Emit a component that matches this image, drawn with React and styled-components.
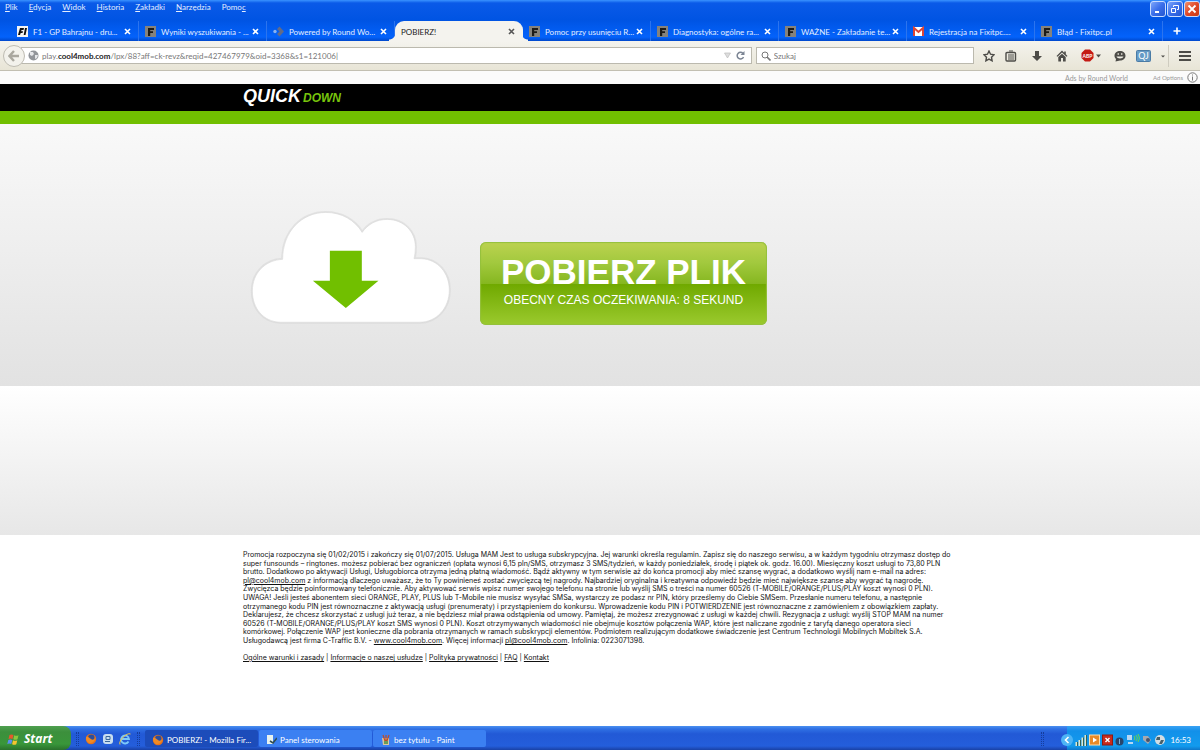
import React from "react";
import styled, { createGlobalStyle, css } from "styled-components";

const GlobalStyle = createGlobalStyle`
  * {
    box-sizing: border-box;
  }
  body {
    margin: 0;
    background: #fff;
    font-family: "Liberation Sans", Arial, sans-serif;
  }
  button,
  input {
    margin: 0;
    padding: 0;
    border: none;
    outline: none;
    background: none;
    color: inherit;
    font: inherit;
  }
  a {
    color: inherit;
  }
  svg {
    display: block;
    flex: none;
  }
`;

const uiFont = css`
  font-family: Lato, Tahoma, sans-serif;
  font-size: 8px;
  line-height: 12px;
  white-space: nowrap;
`;

const Desktop = styled.div`
  display: flex;
  flex-direction: column;
  min-height: 100vh;
`;

/* browser chrome */

const TitleBar = styled.header`
  ${uiFont}
  color: #e4eeff;
  background: linear-gradient(
    #3a93ff 0,
    #0a5ae8 3px,
    #0054e3 20px,
    #0362fb 37px,
    #0048cc 41px
  );
`;

const MenuRow = styled.div`
  display: flex;
  justify-content: space-between;
  height: 21px;
  padding-left: 5px;
`;

const Menu = styled.nav`
  display: flex;
  gap: 11px;
  padding-top: 1px;
  height: 14px;
`;

const WindowButtons = styled.div`
  display: flex;
  gap: 1px;
  padding-top: 1px;
`;

const WindowButton = styled.button`
  display: grid;
  place-items: center;
  width: 16px;
  height: 16px;
  border: 1px solid #c8dcff;
  border-radius: 3px;
  background: ${(props) =>
    props.$close
      ? "linear-gradient(135deg, #f0906c, #e0492a 50%, #c83a14)"
      : "linear-gradient(135deg, #7da6fb, #3a6eea 50%, #2456d0)"};
`;

const TabRow = styled.div`
  display: flex;
  height: 20px;
  padding-left: 11px;
`;

const TabItem = styled.div`
  position: relative;
  display: flex;
  flex: 1;
  align-items: center;
  gap: 5px;
  min-width: 0;
  padding: 1px 6px 0;
  border-right: 1px solid ${(props) => (props.$active ? "#f4f3ee" : "#2c74ee")};
  ${(props) =>
    props.$active &&
    css`
      color: #222;
      background: #f4f3ee;
      border-radius: 9px 9px 0 0;
      &::before,
      &::after {
        content: "";
        position: absolute;
        bottom: 0;
        width: 6px;
        height: 8px;
      }
      &::before {
        left: -6px;
        background: radial-gradient(
          circle at 0 0,
          transparent 6px,
          #f4f3ee 7px
        );
      }
      &::after {
        right: -6px;
        background: radial-gradient(
          circle at 100% 0,
          transparent 6px,
          #f4f3ee 7px
        );
      }
    `}
`;

const TabTitle = styled.span`
  flex: 1;
  min-width: 0;
`;

const CloseButton = styled.button`
  display: grid;
  place-items: center;
  width: 9px;
  height: 12px;
`;

const NewTab = styled.button`
  display: grid;
  place-items: center;
  width: 37px;
  padding-right: 10px;
`;

const NavBar = styled.div`
  ${uiFont}
  display: flex;
  align-items: center;
  height: 30px;
  padding: 0 9px 0 3px;
  background: linear-gradient(#f4f3ee, #e8e5d6);
  border-bottom: 1px solid #c2bfb2;
  color: #555;
`;

const BackButton = styled.button`
  display: grid;
  place-items: center;
  z-index: 1;
  width: 22px;
  height: 22px;
  border: 1px solid #bebcb2;
  border-radius: 50%;
  background: #f3f2ec;
`;

const Field = styled.div`
  display: flex;
  align-items: center;
  height: 17px;
  border: 1px solid #bbb9ae;
  background: #fff;
  color: #777;
`;

const UrlField = styled(Field)`
  flex: 717;
  gap: 3px;
  margin: 0 4px 0 -4px;
  padding: 0 5px 0 6px;
  b {
    color: #222;
  }
`;

const UrlText = styled.label`
  display: flex;
  flex: 1;
`;

const SearchField = styled(Field)`
  flex: 212;
  gap: 3px;
  padding-left: 4px;
`;

const TextInput = styled.input`
  flex: 1;
  min-width: 0;
  &::placeholder {
    color: #777;
    opacity: 1;
  }
`;

const ToolIcons = styled.div`
  display: flex;
  align-items: center;
  padding-left: 9px;
`;

const ToolButton = styled.button`
  display: flex;
  align-items: center;
  gap: 2px;
  height: 18px;
  margin-right: ${(props) => props.$gap}px;
`;

/* page */

const AdStrip = styled.div`
  ${uiFont}
  display: flex;
  justify-content: flex-end;
  align-items: center;
  height: 13px;
  padding-right: 2px;
  background: #fbfbfb;
  color: #999;
  font-size: 7px;
`;

const AdOptions = styled.a`
  display: flex;
  align-items: center;
  gap: 4px;
  margin-left: 25px;
  font-size: 6px;
  text-decoration: none;
`;

const Brand = styled.div`
  height: 40px;
  background: #000;
  border-bottom: 13px solid #71bf00;
`;

const Column = styled.div`
  width: 100%;
  max-width: 714px;
  margin: 0 auto;
`;

const Logo = styled.h1`
  margin: 0;
  color: #fff;
  font-size: 18px;
  font-style: italic;
  line-height: 24px;
  span {
    margin-left: 2px;
    color: #78c40c;
    font-size: 12px;
  }
`;

const Hero = styled.section`
  padding: 86px 0 61px;
  background: linear-gradient(#f9f9f9, #e2e2e2);
`;

const HeroContent = styled(Column)`
  display: flex;
  align-items: flex-end;
  gap: 27px;
  padding-left: 7px;
`;

const DownloadButton = styled.button`
  display: flex;
  flex-direction: column;
  align-items: center;
  width: 287px;
  height: 83px;
  padding-top: 11px;
  border-radius: 6px;
  color: #fff;
  background: linear-gradient(
    #bcd24f 0,
    #a2c93e 25%,
    #86b720 50%,
    #70a900 51%,
    #9bca2e 100%
  );
  box-shadow: inset 0 0 1px 1px #94c03c;
  cursor: pointer;
  strong {
    font-size: 35px;
    line-height: 38px;
  }
  span {
    font-size: 12px;
    line-height: 18px;
  }
`;

const Band = styled.div`
  height: 149px;
  background: linear-gradient(#fff, #e7e7e7);
`;

const Legal = styled(Column)`
  flex: 1;
  padding: 16px 0 40px;
  color: #111;
  font-family: Inter, "Liberation Sans", Arial, sans-serif;
  font-size: 7px;
  line-height: 8px;
`;

const Terms = styled.p`
  display: flex;
  flex-direction: column;
  justify-content: space-between;
  min-height: 94px;
  margin: 0 0 9px;
  white-space: nowrap;
`;

/* taskbar */

const Taskbar = styled.footer`
  ${uiFont}
  display: flex;
  height: 24px;
  color: #fff;
  background: linear-gradient(
    #4a90f0 0,
    #2f70e4 3px,
    #2259d6 8px,
    #245edb 20px,
    #1941a5 24px
  );
`;

const StartButton = styled.button`
  display: flex;
  align-items: center;
  gap: 4px;
  width: 71px;
  padding: 2px 0 0 7px;
  border-radius: 0 8px 8px 0;
  background: linear-gradient(#4fa050 0, #3c8f3c 6px, #39963a 18px, #2a702c);
  font-family: "Open Sans", sans-serif;
  font-size: 12px;
  font-style: italic;
  font-weight: bold;
`;

const Grip = styled.span`
  align-self: center;
  width: 3px;
  height: 14px;
  margin: 2px 5px 0;
  border: 1px dotted #143d9c;
  border-width: 0 1px;
`;

const QuickLaunch = styled.div`
  display: flex;
  align-items: center;
  gap: 5px;
  padding: 2px 1px 0;
`;

const Tasks = styled.div`
  display: flex;
  flex: 1;
  gap: 1px;
  padding-top: 4px;
`;

const Task = styled.button`
  display: flex;
  align-items: center;
  gap: 3px;
  width: 113px;
  height: 17px;
  padding: 2px 0 0 7px;
  border-radius: 2px;
  background: ${(props) => (props.$active ? "#1c4cba" : "#3b80f2")};
`;

const Tray = styled.div`
  display: flex;
  align-items: center;
  gap: 2px;
  padding: 3px 9px 0 0;
  margin-left: 18px;
  background: linear-gradient(#3aa2f4 0, #1290e9 5px, #129bee 20px, #0f76c8);
  svg:first-child {
    margin-left: -6px;
  }
  time {
    margin-left: 2px;
  }
`;

const Favicon = ({ kind }) => {
  if (kind === "gmail") {
    return (
      <svg width="11" height="11" viewBox="0 0 11 11">
        <rect y="1" width="11" height="9" rx="1" fill="#fff" />
        <path d="M1 10V2l4.500 4L10 2v8" fill="none" stroke="#dc4437" strokeWidth="2" />
      </svg>
    );
  }
  if (kind === "world") {
    return (
      <svg width="11" height="11" viewBox="0 0 11 11">
        <circle cx="2" cy="5.500" r="1.700" fill="#8ab2ee" />
        <path d="M6.500 0.500L11 5.500 6.500 10.500 4 8l2.500-2.500L4 3z" fill="#626b88" />
      </svg>
    );
  }
  const light = kind === "f1";
  return (
    <svg width="11" height="11" viewBox="0 0 11 11">
      <rect width="11" height="11" fill={light ? "#f4f4f4" : "#85827c"} />
      {light ? (
        <path d="M3 2h4L6.500 4H4.500l-.3 1.200H6L5.500 7H3.700L3 9H1zM8 2h2L8.500 9H6.700z" fill="#111" />
      ) : (
        <path d="M3 2h6v2H5.200v1.200H8V7H5.200v3H3z" fill="#1d1b18" />
      )}
    </svg>
  );
};

const Cross = ({ color }) => (
  <svg width="7" height="7" viewBox="0 0 7 7">
    <path d="M1 1l5 5M6 1L1 6" stroke={color} strokeWidth="1.600" />
  </svg>
);

const Globe = () => (
  <svg width="11" height="11" viewBox="0 0 11 11">
    <circle cx="5.500" cy="5.500" r="5" fill="#92959a" />
    <path d="M2 2l3 0 1 2-2 2-2-1zM7 5l3 0-1 3-2 1z" fill="#e6e7ea" />
  </svg>
);

const Firefox = () => (
  <svg width="12" height="12" viewBox="0 0 12 12">
    <circle cx="6" cy="6" r="5.200" fill="#e5721b" />
    <circle cx="6.300" cy="4.800" r="3.200" fill="#2c4e9e" />
    <path d="M1 4c2-1 3 1 5 2 1 1 3 1 4-1 0 4-3 5-5 5S1 8 1 4z" fill="#f08a24" />
  </svg>
);

const Cloud = () => (
  <svg width="203" height="115" viewBox="60 60 610 345" overflow="visible">
    <path
      d="M150 397C100 395 67 355 67 303C67 250 105 210 158 208C158 125 215 67 288 67C335 67 375 90 397 127C415 102 440 88 472 88C522 88 557 125 557 170Q557 190 553 206H575C625 208 659 250 659 300C659 355 620 397 570 397Z"
      fill="#fff"
      stroke="#d3d3d3"
      strokeWidth="9"
      strokeOpacity="0.500"
    />
    <path
      d="M150 397C100 395 67 355 67 303C67 250 105 210 158 208C158 125 215 67 288 67C335 67 375 90 397 127C415 102 440 88 472 88C522 88 557 125 557 170Q557 190 553 206H575C625 208 659 250 659 300C659 355 620 397 570 397Z"
      fill="#fff"
      stroke="#dadada"
      strokeWidth="2"
    />
    <path d="M300 182H396V272H446L348 354L249 272H300Z" fill="#71bf00" />
  </svg>
);

const menuItems = [
  ["", "P", "lik"],
  ["", "E", "dycja"],
  ["", "W", "idok"],
  ["", "H", "istoria"],
  ["", "Z", "akładki"],
  ["", "N", "arzędzia"],
  ["Pomo", "c", ""],
];

const tabs = [
  { icon: "f1", title: "F1 - GP Bahrajnu - dru..." },
  { icon: "f", title: "Wyniki wyszukiwania - ..." },
  { icon: "world", title: "Powered by Round Wo..." },
  { title: "POBIERZ!", active: true },
  { icon: "f", title: "Pomoc przy usunięciu R..." },
  { icon: "f", title: "Diagnostyka: ogólne ra..." },
  { icon: "f", title: "WAŻNE - Zakładanie te..." },
  { icon: "gmail", title: "Rejestracja na Fixitpc...." },
  { icon: "f", title: "Błąd - Fixitpc.pl" },
];

const mail = <a href="mailto:pl@cool4mob.com">pl@cool4mob.com</a>;

const terms = [
  "Promocja rozpoczyna się 01/02/2015 i zakończy się 01/07/2015. Usługa MAM Jest to usługa subskrypcyjna. Jej warunki określa regulamin. Zapisz się do naszego serwisu, a w każdym tygodniu otrzymasz dostęp do",
  "super funsounds – ringtones. możesz pobierać bez ograniczeń (opłata wynosi 6,15 pln/SMS, otrzymasz 3 SMS/tydzień, w każdy poniedziałek, środę i piątek ok. godz. 16.00). Miesięczny koszt usługi to 73,80 PLN",
  "brutto. Dodatkowo po aktywacji Usługi, Usługobiorca otrzyma jedną płatną wiadomość. Bądź aktywny w tym serwisie aż do końca promocji aby mieć szansę wygrać, a dodatkowo wyślij nam e-mail na adres:",
  <>
    {mail} z informacją dlaczego uważasz, że to Ty powinieneś zostać zwycięzcą
    tej nagrody. Najbardziej oryginalna i kreatywna odpowiedź będzie mieć
    największe szanse aby wygrać tą nagrodę.
  </>,
  "Zwycięzca będzie poinformowany telefonicznie. Aby aktywować serwis wpisz numer swojego telefonu na stronie lub wyślij SMS o treści na numer 60526 (T-MOBILE/ORANGE/PLUS/PLAY koszt wynosi 0 PLN).",
  "UWAGA! Jeśli jesteś abonentem sieci ORANGE, PLAY, PLUS lub T-Mobile nie musisz wysyłać SMSa, wystarczy ze podasz nr PIN, który prześlemy do Ciebie SMSem. Przesłanie numeru telefonu, a następnie",
  "otrzymanego kodu PIN jest równoznaczne z aktywacją usługi (prenumeraty) i przystąpieniem do konkursu. Wprowadzenie kodu PIN i POTWIERDZENIE jest równoznaczne z zamówieniem z obowiązkiem zapłaty.",
  "Deklarujesz, że chcesz skorzystać z usługi już teraz, a nie będziesz miał prawa odstąpienia od umowy. Pamiętaj, że możesz zrezygnować z usługi w każdej chwili. Rezygnacja z usługi: wyślij STOP MAM na numer",
  "60526 (T-MOBILE/ORANGE/PLUS/PLAY koszt SMS wynosi 0 PLN). Koszt otrzymywanych wiadomości nie obejmuje kosztów połączenia WAP, które jest naliczane zgodnie z taryfą danego operatora sieci",
  "komórkowej. Połączenie WAP jest konieczne dla pobrania otrzymanych w ramach subskrypcji elementów. Podmiotem realizującym dodatkowe świadczenie jest Centrum Technologii Mobilnych Mobiltek S.A.",
  <>
    Usługodawcą jest firma C-Traffic B.V. -{" "}
    <a href="http://www.cool4mob.com">www.cool4mob.com</a>. Więcej informacji{" "}
    {mail}. Infolinia: 0223071398.
  </>,
];

const footerLinks = [
  "Ogólne warunki i zasady",
  "Informacje o naszej usłudze",
  "Polityka prywatności",
  "FAQ",
  "Kontakt",
];

const BrowserTop = () => (
  <TitleBar>
    <MenuRow>
      <Menu>
        {menuItems.map(([before, key, after]) => (
          <span key={before + key}>
            {before}
            <u>{key}</u>
            {after}
          </span>
        ))}
      </Menu>
      <WindowButtons>
        <WindowButton aria-label="Minimalizuj">
          <svg width="10" height="10" viewBox="0 0 10 10">
            <path d="M2 8h4" stroke="#fff" strokeWidth="2" />
          </svg>
        </WindowButton>
        <WindowButton aria-label="Przywróć">
          <svg width="10" height="10" viewBox="0 0 10 10" fill="none" stroke="#fff">
            <path d="M3.500 3V1.500h5v4H7M1.500 4.500h4v4h-4z" />
          </svg>
        </WindowButton>
        <WindowButton $close aria-label="Zamknij">
          <svg width="10" height="10" viewBox="0 0 10 10">
            <path d="M1.500 1.500l7 7M8.500 1.500l-7 7" stroke="#fff" strokeWidth="1.800" />
          </svg>
        </WindowButton>
      </WindowButtons>
    </MenuRow>
    <TabRow>
      {tabs.map((tab) => (
        <TabItem key={tab.title} $active={tab.active}>
          {tab.icon && <Favicon kind={tab.icon} />}
          <TabTitle>{tab.title}</TabTitle>
          <CloseButton aria-label="Zamknij kartę">
            <Cross color={tab.active ? "#555" : "#fff"} />
          </CloseButton>
        </TabItem>
      ))}
      <NewTab aria-label="Nowa karta">
        <svg width="8" height="8" viewBox="0 0 8 8">
          <path d="M4 0.500v7M0.500 4h7" stroke="#fff" strokeWidth="1.600" />
        </svg>
      </NewTab>
    </TabRow>
  </TitleBar>
);

const Toolbar = () => (
  <NavBar>
    <BackButton aria-label="Wstecz">
      <svg width="12" height="12" viewBox="0 0 12 12">
        <path d="M6 1L1.500 6L6 11M2 6h9" fill="none" stroke="#aaa89f" strokeWidth="2.400" />
      </svg>
    </BackButton>
    <UrlField>
      <Globe />
      <UrlText>
        play.<b>cool4mob.com</b>
        <TextInput
          aria-label="Adres"
          defaultValue="/lpx/88?aff=ck-revz&reqid=427467979&oid=3368&s1=121006|"
        />
      </UrlText>
      <svg width="7" height="7" viewBox="0 0 7 7">
        <path d="M0.500 1h6L3.500 6z" fill="#ddd" stroke="#bbb" strokeWidth="0.700" />
      </svg>
      <svg width="12" height="9" viewBox="0 0 12 9">
        <path d="M9 2.500A3.300 3.300 0 1 0 9.500 6" fill="none" stroke="#7c8594" strokeWidth="1.500" />
        <path d="M10.500 0v4H6.500z" fill="#7c8594" />
      </svg>
    </UrlField>
    <SearchField>
      <svg width="10" height="10" viewBox="0 0 10 10" fill="none" stroke="#777">
        <circle cx="4" cy="4" r="3" />
        <path d="M6 6l3.500 3.500" strokeWidth="1.600" />
      </svg>
      <TextInput aria-label="Szukaj" placeholder="Szukaj" />
    </SearchField>
    <ToolIcons>
      <ToolButton $gap={10} aria-label="Zakładka">
        <svg width="12" height="12" viewBox="0 0 12 12">
          <path
            d="M6 1l1.500 3.200 3.500.5-2.500 2.500.6 3.600L6 9.100 2.900 10.800l.6-3.600L1 4.700l3.500-.5z"
            fill="none"
            stroke="#4d4c48"
            strokeWidth="1.400"
          />
        </svg>
      </ToolButton>
      <ToolButton $gap={14} aria-label="Lista zakładek">
        <svg width="12" height="12" viewBox="0 0 12 12" stroke="#4d4c48" fill="none">
          <rect x="1" y="2.500" width="9.500" height="8.500" rx="1" strokeWidth="1.400" />
          <path d="M4 1h4M3 5h6M3 7h6M3 9h6" strokeWidth="1.100" />
        </svg>
      </ToolButton>
      <ToolButton $gap={13} aria-label="Pobrane">
        <svg width="12" height="12" viewBox="0 0 12 12">
          <path d="M4 1h4v5h3L6 11 1 6h3z" fill="#4d4c48" />
        </svg>
      </ToolButton>
      <ToolButton $gap={13} aria-label="Strona domowa">
        <svg width="12" height="12" viewBox="0 0 12 12">
          <path d="M6 0.500L0.500 6l1 .7L6 2.600l4.500 4.100 1-.7L9.800 4.200V1.500H8.200v1.200zM2.300 7L6 3.700 9.700 7v4.500H7V8H5v3.500H2.300z" fill="#4d4c48" />
        </svg>
      </ToolButton>
      <ToolButton $gap={13} aria-label="Adblock Plus">
        <svg width="13" height="13" viewBox="0 0 13 13">
          <path d="M4 0.500h5l3.500 3.500v5L9 12.500H4L0.500 9V4z" fill="#c41a14" />
          <text x="6.500" y="8.500" fill="#fff" fontSize="5" fontWeight="bold" textAnchor="middle">
            ABP
          </text>
        </svg>
        <svg width="5" height="4" viewBox="0 0 5 4">
          <path d="M0 0.500h5L2.500 3.500z" fill="#4d4c48" />
        </svg>
      </ToolButton>
      <ToolButton $gap={10} aria-label="Hello">
        <svg width="12" height="12" viewBox="0 0 12 12">
          <path d="M6 1c3 0 5.500 2 5.500 4.700S9 10.500 6 10.500L1.500 11.500 2 9C1 8 .5 7 .5 5.700.5 3 3 1 6 1z" fill="#4d4c48" />
          <path d="M2.500 6.500h7C9 9 3 9 2.500 6.500z" fill="#eeece3" />
          <path d="M4.200 3v2M7.800 3v2" stroke="#eeece3" />
        </svg>
      </ToolButton>
      <ToolButton $gap={10} aria-label="Słownik">
        <svg width="15" height="12" viewBox="0 0 15 12">
          <rect x="0.500" y="0.500" width="14" height="11" rx="1" fill="#669bc6" stroke="#4a7ba5" />
          <text x="7.500" y="9" fill="#fff" fontSize="9" textAnchor="middle">
            QJ
          </text>
        </svg>
        <svg width="16" height="22" viewBox="0 0 16 22">
          <path d="M8 10.500h4l-2 2z" fill="#4d4c48" />
          <path d="M15.500 0v22" stroke="#cfccc0" />
        </svg>
      </ToolButton>
      <ToolButton $gap={0} aria-label="Menu">
        <svg width="12" height="10" viewBox="0 0 12 10">
          <path d="M0 1h12M0 5h12M0 9h12" stroke="#4d4c48" strokeWidth="2" />
        </svg>
      </ToolButton>
    </ToolIcons>
  </NavBar>
);

const SystemTray = () => (
  <Tray>
    <svg width="12" height="14" viewBox="0 0 12 14">
      <circle cx="6" cy="7" r="6" fill="#4db4f5" />
      <path d="M7.500 4L4.500 7l3 3" fill="none" stroke="#fff" strokeWidth="1.600" />
    </svg>
    <svg width="12" height="12" viewBox="0 0 12 12">
      <path d="M1.500 12V8M4.500 12V6M7.500 12V3.500M10.500 12V1" stroke="#dce8d0" strokeWidth="2" />
      <path d="M2.500 12V8M5.500 12V6M8.500 12V3.500M11.500 12V1" stroke="#1e4a38" strokeWidth="0.800" />
    </svg>
    <svg width="11" height="12" viewBox="0 0 11 12">
      <rect x="0.500" y="1" width="10" height="10" fill="#e88a28" stroke="#fbdca8" />
      <path d="M4 3.500L8 6 4 8.500z" fill="#fff" />
    </svg>
    <svg width="11" height="12" viewBox="0 0 11 12">
      <rect x="0.500" y="1" width="10" height="10" fill="#c92a1c" stroke="#8b1a12" />
      <path d="M3.500 4l4 4M7.500 4l-4 4" stroke="#fff" strokeWidth="1.400" />
    </svg>
    <svg width="9" height="12" viewBox="0 0 9 12">
      <circle cx="4.500" cy="7.500" r="4" fill="#28456b" />
      <path d="M4.500 5v5" stroke="#6eaede" />
    </svg>
    <svg width="14" height="12" viewBox="0 0 14 12">
      <path d="M1 1h5v5H1zM2 8h5v2H2z" fill="#b8d8f4" />
      <path d="M8 2q2 2 0 4M10 1q3 3 0 6M12 0q3 4 0 8" fill="none" stroke="#65d84a" />
    </svg>
    <svg width="10" height="12" viewBox="0 0 10 12">
      <path d="M1 2l5 0 3 4-3 4-5-4z" fill="#a5a8b0" />
      <circle cx="6" cy="6" r="2" fill="#46536c" />
    </svg>
    <svg width="12" height="12" viewBox="0 0 12 12">
      <circle cx="6" cy="6" r="5" fill="#d3dde2" />
      <path d="M3 3h3v3H2zM7 6h3L8 10H5z" fill="#476069" />
    </svg>
    <time>16:53</time>
  </Tray>
);

const App = () => (
  <Desktop>
    <GlobalStyle />
    <BrowserTop />
    <Toolbar />
    <AdStrip>
      Ads by Round World
      <AdOptions href="#options">
        Ad Options
        <svg width="11" height="11" viewBox="0 0 11 11">
          <circle cx="5.500" cy="5.500" r="4.700" fill="none" stroke="#777" />
          <path d="M5.500 4.500v4M5.500 2.500v1" stroke="#777" />
        </svg>
      </AdOptions>
    </AdStrip>
    <Brand>
      <Column>
        <Logo>
          QUICK<span>DOWN</span>
        </Logo>
      </Column>
    </Brand>
    <Hero>
      <HeroContent>
        <Cloud />
        <DownloadButton>
          <strong>POBIERZ PLIK</strong>
          <span>OBECNY CZAS OCZEKIWANIA: 8 SEKUND</span>
        </DownloadButton>
      </HeroContent>
    </Hero>
    <Band />
    <Legal>
      <Terms>
        {terms.map((line, index) => (
          <span key={index}>{line}</span>
        ))}
      </Terms>
      {footerLinks.map((link, index) => (
        <React.Fragment key={link}>
          {index > 0 && " | "}
          <a href="#info">{link}</a>
        </React.Fragment>
      ))}
    </Legal>
    <Taskbar>
      <StartButton>
        <svg width="13" height="13" viewBox="0 0 13 13">
          <path d="M2.500 2q2-1 4 0l-1 4q-2-1-4 0z" fill="#e8582c" />
          <path d="M7.200 2.300q2 1 4.300 0l-1 4q-2 1-4.200 0z" fill="#8cc83c" />
          <path d="M1.300 7q2-1 4 0l-1 4q-2-1-4 0z" fill="#5a8cf0" />
          <path d="M6 7.300q2 1 4.300 0l-1 4q-2 1-4.200 0z" fill="#f5c430" />
        </svg>
        Start
      </StartButton>
      <Grip />
      <QuickLaunch>
        <Firefox />
        <svg width="12" height="12" viewBox="0 0 12 12">
          <rect x="1" y="1" width="10" height="10" rx="3" fill="#c8def0" />
          <path d="M4 3.500h4v3H4zM3 8.500h5" fill="none" stroke="#39679c" />
        </svg>
        <svg width="12" height="12" viewBox="0 0 12 12">
          <path d="M9.500 8.500A4 4 0 1 1 10 6H3" fill="none" stroke="#7cc8fa" strokeWidth="1.800" />
          <path d="M1 11.500C-1 8 8-1 11.500 1" fill="none" stroke="#f0c848" />
        </svg>
      </QuickLaunch>
      <Grip />
      <Tasks>
        <Task $active>
          <Firefox />
          POBIERZ! - Mozilla Fir...
        </Task>
        <Task>
          <svg width="11" height="12" viewBox="0 0 11 12">
            <path d="M1 1h6v9H1z" fill="#e7f2ef" />
            <path d="M4 7l3 2 4-5" fill="none" stroke="#304d50" strokeWidth="1.600" />
          </svg>
          Panel sterowania
        </Task>
        <Task>
          <svg width="11" height="12" viewBox="0 0 11 12">
            <path d="M2 4h7v7H3z" fill="#d9c6a0" />
            <path d="M3 1l2 6M6 1v6M9 1L7 7" stroke="#bd4b28" strokeWidth="1.200" />
            <path d="M4 7h4v3H4z" fill="#6a9c58" />
          </svg>
          bez tytułu - Paint
        </Task>
      </Tasks>
      <Grip />
      <SystemTray />
    </Taskbar>
  </Desktop>
);

export default App;
